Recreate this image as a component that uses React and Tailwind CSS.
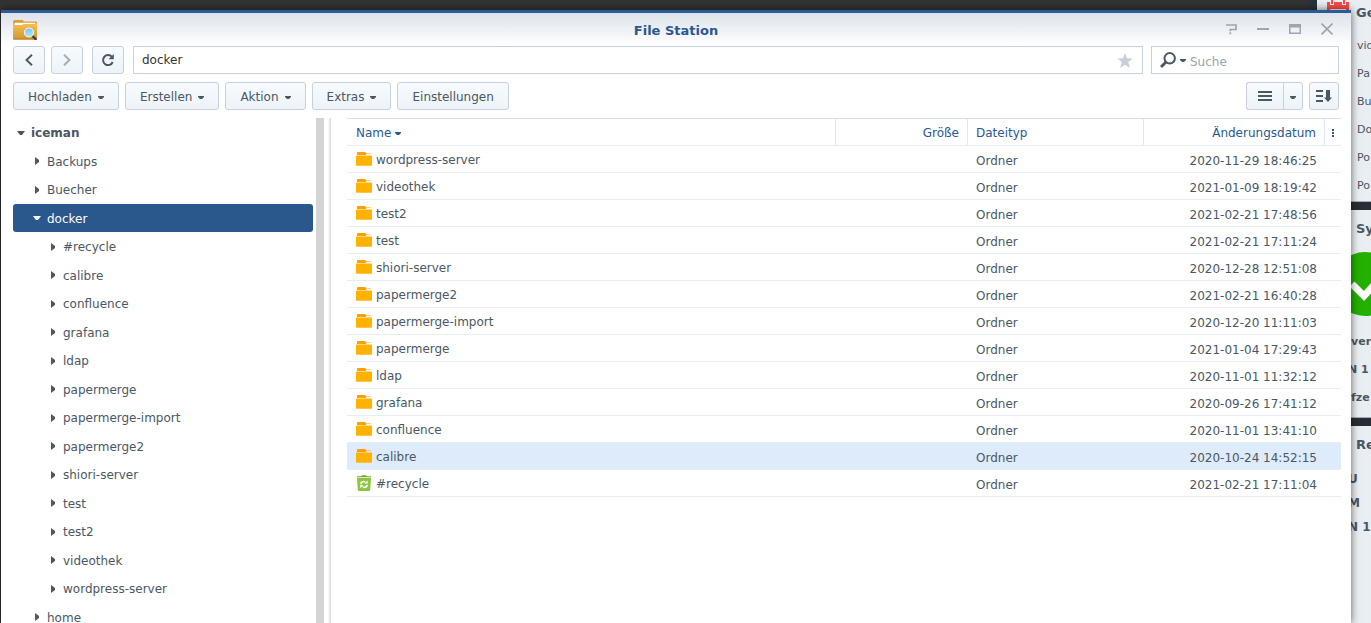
import React from "react";

const files = [
  ["wordpress-server", "2020-11-29 18:46:25"],
  ["videothek", "2021-01-09 18:19:42"],
  ["test2", "2021-02-21 17:48:56"],
  ["test", "2021-02-21 17:11:24"],
  ["shiori-server", "2020-12-28 12:51:08"],
  ["papermerge2", "2021-02-21 16:40:28"],
  ["papermerge-import", "2020-12-20 11:11:03"],
  ["papermerge", "2021-01-04 17:29:43"],
  ["ldap", "2020-11-01 11:32:12"],
  ["grafana", "2020-09-26 17:41:12"],
  ["confluence", "2020-11-01 13:41:10"],
  ["calibre", "2020-10-24 14:52:15"],
  ["#recycle", "2021-02-21 17:11:04"],
];

const tree = [
  { name: "iceman", level: 0, open: true },
  { name: "Backups", level: 1 },
  { name: "Buecher", level: 1 },
  { name: "docker", level: 1, open: true, selected: true },
  { name: "#recycle", level: 2 },
  { name: "calibre", level: 2 },
  { name: "confluence", level: 2 },
  { name: "grafana", level: 2 },
  { name: "ldap", level: 2 },
  { name: "papermerge", level: 2 },
  { name: "papermerge-import", level: 2 },
  { name: "papermerge2", level: 2 },
  { name: "shiori-server", level: 2 },
  { name: "test", level: 2 },
  { name: "test2", level: 2 },
  { name: "videothek", level: 2 },
  { name: "wordpress-server", level: 2 },
  { name: "home", level: 1 },
];

const indents = ["pl-1", "pl-5", "pl-9"];

const Caret = () => (
  <svg width="6" height="3" viewBox="0 0 6 3" className="shrink-0" aria-hidden="true">
    <path d="M0 0h6v1L4 3H2L0 1z" fill="currentColor" />
  </svg>
);

const TreeArrow = ({ open }) => (
  <svg width="8" height="8" viewBox="0 0 8 8" className="shrink-0" aria-hidden="true">
    {open ? <path d="M0 2h8L5 6H3z" fill="currentColor" /> : <path d="M2 0l4 3v2L2 8z" fill="currentColor" />}
  </svg>
);

const FolderIcon = () => (
  <svg width="16" height="14" viewBox="0 0 16 14" className="shrink-0" aria-hidden="true">
    <path d="M1 3V.8Q1 0 1.800 0h7.400L10 1.500h4.500q.5 0 .5.500H10.500l-.5 1z" fill="#ff9f00" />
    <path d="M0 4q0-.5.5-.5h15q.5 0 .5.500v9q0 .8-.8.800H.8q-.8 0-.8-.8z" fill="#ffb200" />
  </svg>
);

const BinIcon = () => (
  <svg width="16" height="16" viewBox="0 0 16 16" className="shrink-0" aria-hidden="true">
    <path d="M1 1.300h4.500Q5.500.2 6.500.2h3q1 0 1 1.100H15v1H1z" fill="#6aa733" />
    <path d="M1 3h14l-.8 12q-.1 1-1 1H2.800q-.9 0-1-1z" fill="#8cc63f" />
    <path d="M4.800 9.200q.2-2.600 3.200-2.600l1.300.4" fill="none" stroke="#fff" strokeWidth="1.500" />
    <path d="M8.500 8.600h3.200V5.400z" fill="#fff" />
    <path d="M11.200 9.800q-.4 2.600-3.200 2.600l-1.300-.4" fill="none" stroke="#fff" strokeWidth="1.500" />
    <path d="M7.500 10.100H4.300v3.200z" fill="#fff" />
  </svg>
);

const AppIcon = () => (
  <svg width="24" height="20" viewBox="0 0 24 20" className="shrink-0" aria-hidden="true">
    <defs>
      <linearGradient id="folder" x1="0" y1="0" x2="0" y2="1">
        <stop offset="0" stopColor="#f5c050" />
        <stop offset="1" stopColor="#d29635" />
      </linearGradient>
      <linearGradient id="lens" x1="0" y1="0" x2="0" y2="1">
        <stop offset="0" stopColor="#6cc6fa" />
        <stop offset="1" stopColor="#b5e5ff" />
      </linearGradient>
    </defs>
    <path d="M0 2Q0 0 1.500 0h8.300l1.200 1.500h12q1 0 1 1V8H0z" fill="#dc9f38" />
    <path d="M1.500 2.800h21V6h-21z" fill="#fff" />
    <path d="M0 3.500h1.500V5H8q1 0 1.600-.5.500-.5 1.400-.5h11.500l1.500-.5V18.500q0 .9-1 .9H1q-1 0-1-.9z" fill="url(#folder)" />
    <path d="M0 18.600h24q0 1-1 1H1q-1 0-1-1z" fill="#b87f2a" />
    <path d="m19 15.500 3.600 3.600" stroke="#3c4248" strokeWidth="2.400" strokeLinecap="round" />
    <circle cx="16" cy="12.500" r="4.500" fill="url(#lens)" stroke="#f5f3ec" strokeWidth="1.200" />
  </svg>
);

const btn =
  "flex h-7 items-center justify-center border border-[#c5d1dd] bg-linear-to-b from-[#f7fbff] to-[#edf3f8] text-[#4b5763]";

function MenuButton({ children, caret = true }) {
  return (
    <button type="button" className={`${btn} gap-1.5 rounded-[3px] px-3.5 pt-0.5`}>
      {children}
      {caret && <Caret />}
    </button>
  );
}

function TitleBar() {
  return (
    <header className="flex h-[33px] items-center bg-linear-to-b from-[#dde3eb] to-white px-3">
      <div className="flex flex-1 pr-1.5"><AppIcon /></div>
      <h1 className="pt-0.5 text-[13px] font-bold text-[#2a588f]">File Station</h1>
      <div className="flex flex-1 items-center justify-end gap-5 pr-1.5 pb-0.5 text-[#a0a5ab]">
        <button type="button" aria-label="Hilfe">
          <svg width="12" height="12" viewBox="0 0 12 12"><path d="M1 2h10v4.500H5.300V8.300M5.300 9.300v2" fill="none" stroke="currentColor" strokeWidth="1.700" /></svg>
        </button>
        <button type="button" aria-label="Minimieren">
          <svg width="12" height="12" viewBox="0 0 12 12"><path d="M0 6h12" stroke="currentColor" strokeWidth="2" /></svg>
        </button>
        <button type="button" aria-label="Maximieren">
          <svg width="12" height="12" viewBox="0 0 12 12"><path d="M0 1h12v10H0zM1.500 4.500v5h9v-5z" fill="currentColor" fillRule="evenodd" /></svg>
        </button>
        <button type="button" aria-label="Schließen">
          <svg width="12" height="12" viewBox="0 0 12 12"><path d="m.5.5 11 11m0-11-11 11" stroke="currentColor" strokeWidth="1.600" /></svg>
        </button>
      </div>
    </header>
  );
}

function Navigation() {
  return (
    <div className="flex h-7">
      <button type="button" aria-label="Zurück" className={`${btn} w-8 rounded-[3px]`}>
        <svg width="8" height="12" viewBox="0 0 8 12"><path d="M7 .7 1.500 6 7 11.300" fill="none" stroke="currentColor" strokeWidth="1.900" /></svg>
      </button>
      <button type="button" aria-label="Vorwärts" className={`${btn} ml-1.5 w-8 rounded-[3px]`}>
        <svg width="8" height="12" viewBox="0 0 8 12"><path d="M1 .7 6.500 6 1 11.300" fill="none" stroke="#a3abb5" strokeWidth="1.900" /></svg>
      </button>
      <button type="button" aria-label="Aktualisieren" className={`${btn} ml-[9px] w-8 rounded-[3px]`}>
        <svg width="14" height="14" viewBox="0 0 14 14">
          <path d="M11 4A5 5 0 1 0 11.700 9" fill="none" stroke="currentColor" strokeWidth="2" />
          <path d="M12.800 1v5.200H7.600z" fill="currentColor" />
        </svg>
      </button>
      <div className="ml-[9px] flex min-w-0 flex-1 items-center border border-[#c5d1dd] pr-[9px] pl-2">
        <input aria-label="Pfad" defaultValue="docker" className="min-w-0 flex-1 bg-transparent text-[#333] outline-none" />
        <button type="button" aria-label="Favorit">
          <svg width="16" height="15" viewBox="0 0 16 15"><path d="m8 0 2 5.300 5.700.3-4.400 3.500L12.800 15 8 11.700 3.200 15l1.500-5.900L.3 5.600 6 5.300z" fill="#c6d0dc" /></svg>
        </button>
      </div>
      <div className="ml-2 flex w-[188px] items-center border border-[#c5d1dd] pl-2 text-[#4b5763]">
        <svg width="17" height="16" viewBox="0 0 17 16" aria-hidden="true">
          <circle cx="9.700" cy="6.300" r="5.200" fill="none" stroke="currentColor" strokeWidth="2" />
          <path d="M6 10 1 15" stroke="currentColor" strokeWidth="2.800" />
        </svg>
        <button type="button" aria-label="Suchoptionen" className="ml-[3px]">
          <Caret />
        </button>
        <input aria-label="Suche" placeholder="Suche" className="ml-1 min-w-0 flex-1 bg-transparent pt-1 outline-none placeholder:text-[#98a3ae]" />
      </div>
    </div>
  );
}

function Toolbar() {
  return (
    <div className="mt-2 flex h-7 gap-1.5">
      <MenuButton>Hochladen</MenuButton>
      <MenuButton>Erstellen</MenuButton>
      <MenuButton>Aktion</MenuButton>
      <MenuButton>Extras</MenuButton>
      <MenuButton caret={false}>Einstellungen</MenuButton>
      <div className="ml-auto flex">
        <button type="button" aria-label="Listenansicht" className={`${btn} w-[37px] rounded-l-[3px] border-r-0`}>
          <svg width="14" height="10" viewBox="0 0 14 10"><path d="M0 1h14M0 5h14M0 9h14" stroke="currentColor" strokeWidth="2" /></svg>
        </button>
        <button type="button" aria-label="Ansicht wählen" className={`${btn} w-5 rounded-r-[3px] pt-0.5`}>
          <Caret />
        </button>
      </div>
      <button type="button" aria-label="Sortieren" className={`${btn} w-[30px] rounded-[3px]`}>
        <svg width="16" height="14" viewBox="0 0 16 14">
          <path d="M0 2h7M0 7h7M0 12h7" stroke="currentColor" strokeWidth="2" />
          <path d="M10 1h4v7.500h2L12 13 8 8.500h2z" fill="currentColor" />
        </svg>
      </button>
    </div>
  );
}

function FolderTree() {
  return (
    <nav aria-label="Ordner" className="w-[300px] shrink-0 self-start">
      <ul>
        {tree.map((n) => (
          <li key={`${n.level}${n.name}`} className="odd:h-[29px] even:h-7">
            <a
              href="#"
              className={`flex h-full items-center gap-1.5 rounded-[3px] ${indents[n.level]} ${
                n.selected ? "bg-[#2a588c] text-white" : "text-[#4b5763]"
              } ${n.level === 0 ? "font-bold" : ""}`}
            >
              <TreeArrow open={n.open} />
              <span className="pt-px">{n.name}</span>
            </a>
          </li>
        ))}
      </ul>
    </nav>
  );
}

function FileTable() {
  const th = "h-7 border-t border-b border-t-[#d3dfea] border-b-[#e6edf3] pt-0.5 pb-0 font-normal";
  const td = "h-[27px] border-b border-[#e6edf3] py-0";
  return (
    <table className="w-full table-fixed border-separate border-spacing-0">
      <colgroup>
        <col />
        <col className="w-[132px]" />
        <col className="w-[176px]" />
        <col className="w-[181px]" />
        <col className="w-4" />
      </colgroup>
      <thead className="text-[#2a588f]">
        <tr>
          <th className={`${th} border-r border-r-[#dfe8f0] pl-[9px] text-left`}>
            <button type="button" className="flex items-center gap-1">Name <Caret /></button>
          </th>
          <th className={`${th} border-r border-r-[#dfe8f0] pr-2 text-right`}>Größe</th>
          <th className={`${th} border-r border-r-[#dfe8f0] pl-2 text-left`}>Dateityp</th>
          <th className={`${th} border-r border-r-[#dfe8f0] pr-2 text-right`}>Änderungsdatum</th>
          <th className={th}>
            <button type="button" aria-label="Spalten" className="flex w-full justify-center">
              <svg width="2" height="8" viewBox="0 0 2 8"><path d="M0 0h2v2H0zM0 3h2v2H0zM0 6h2v2H0z" fill="currentColor" /></svg>
            </button>
          </th>
        </tr>
      </thead>
      <tbody>
        {files.map(([name, date]) => (
          <tr key={name} className={name === "calibre" ? "bg-[#deebfa]" : ""}>
            <td className={`${td} pl-[9px]`}>
              <span className="flex items-center gap-1">
                {name === "#recycle" ? <BinIcon /> : <FolderIcon />}
                <span className="pt-px">{name}</span>
              </span>
            </td>
            <td className={td}></td>
            <td className={`${td} pt-[3px] pl-2`}>Ordner</td>
            <td className={`${td} pt-[3px] pr-2 text-right`}>{date}</td>
            <td className={td}></td>
          </tr>
        ))}
      </tbody>
    </table>
  );
}

function Widgets() {
  return (
    <aside className="ml-auto flex h-full w-16 flex-col gap-2 overflow-hidden border-l-[10px] border-[#29323d] bg-[#292e35] whitespace-nowrap text-[#4b5763]">
      <section className="h-[202px] shrink-0 border-b border-[#a3abb3] bg-[#e9eef3]">
        <div className="flex h-8 items-start pl-2.5">
          <svg width="22" height="20" viewBox="0 0 22 20" className="shrink-0" aria-hidden="true">
            <path d="M0 2h3v3h4V2h8v3h4V2h3v18H0z" fill="#fa4b4b" />
            <path d="M4 0h2v4H4zM16 0h2v4h-2z" fill="#fa4b4b" />
            <path d="M3 9h16v11H3z" fill="#fff" />
          </svg>
          <h2 className="pt-[3px] pl-[7px] text-[13px] leading-5 font-bold">Ge</h2>
        </div>
        <ul className="pl-10 text-[11px] leading-7">
          <li>vid</li><li>Pa</li><li>Bu</li><li>Do</li><li>Po</li><li>Po</li>
        </ul>
      </section>
      <section className="h-[208px] shrink-0 border-b border-[#a3abb3] bg-[#e9eef3]">
        <h2 className="pt-[9px] pl-[39px] text-[13px] leading-5 font-bold">Sy</h2>
        <svg width="64" height="64" viewBox="0 0 64 64" className="mt-[13px] ml-4" aria-hidden="true">
          <circle cx="32" cy="32" r="32" fill="#23b000" />
          <path d="m19 32 12 12 20-22" fill="none" stroke="#fff" strokeWidth="7" />
        </svg>
        <ul className="mt-3 pl-[34px] text-[11px] leading-7 font-bold">
          <li>ver</li>
          <li className="-ml-[3px]">N 1</li>
          <li>fze</li>
        </ul>
      </section>
      <section className="flex-1 bg-[#e9eef3]">
        <h2 className="pt-[9px] pl-[39px] text-[13px] leading-5 font-bold">Re</h2>
        <ul className="mt-3 pl-[31px] text-xs leading-6 font-bold">
          <li>U</li><li>M</li><li>N 1</li>
        </ul>
      </section>
    </aside>
  );
}

export default function App() {
  return (
    <div className="relative h-screen overflow-hidden bg-[#333] font-['DejaVu_Sans','Liberation_Sans',sans-serif] text-xs text-[#4b5763]">
      <Widgets />
      <main className="absolute top-2.5 right-5 bottom-0 left-px flex flex-col overflow-hidden border-t-[3px] border-[#2c5a94] bg-white shadow-[0_0_8px_rgba(0,0,0,0.6)]">
        <TitleBar />
        <div className="px-3">
          <Navigation />
          <Toolbar />
        </div>
        <div className="mt-2 flex min-h-0 flex-1 pr-2.5 pl-3">
          <FolderTree />
          <div className="ml-[3px] w-2 shrink-0 bg-[#d3d4d6]" />
          <div className="ml-1 w-[3px] shrink-0 bg-linear-to-r from-white to-[#d8d8d8]" />
          <div className="min-w-0 flex-1 pl-4">
            <FileTable />
          </div>
        </div>
      </main>
    </div>
  );
}
